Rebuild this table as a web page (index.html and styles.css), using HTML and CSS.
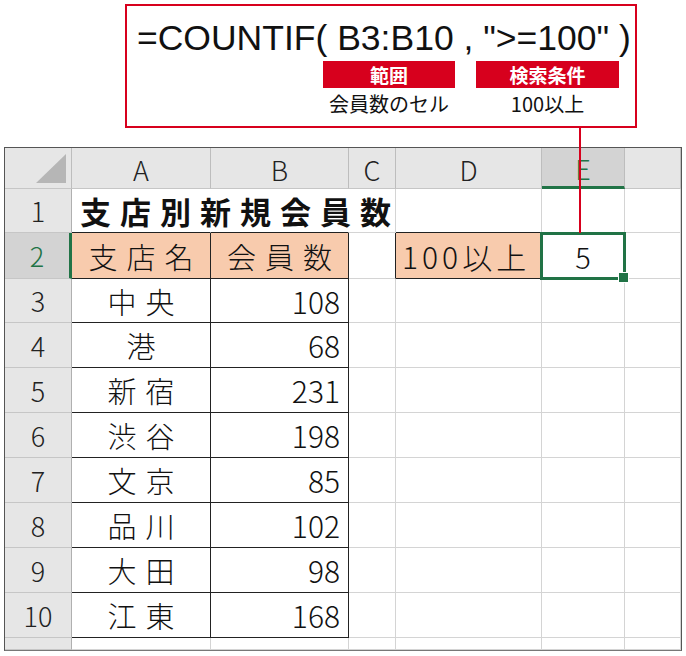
FILE: index.html
```html
<!DOCTYPE html>
<html lang="ja">
<head>
<meta charset="utf-8">
<title>COUNTIF</title>
<link rel="stylesheet" href="styles.css">
</head>
<body>
<div class="callout">
  <div class="formula">=COUNTIF( B3:B10 , "&gt;=100" )</div>
  <div class="args">
    <div class="arg arg-range">
      <div class="tag">範囲</div>
      <div class="desc">会員数のセル</div>
    </div>
    <div class="arg arg-crit">
      <div class="tag">検索条件</div>
      <div class="desc">100以上</div>
    </div>
  </div>
</div>
<div class="pointer"></div>

<div class="sheet">
  <div class="hd corner"><div class="tri"></div></div>
  <div class="hd col">A</div>
  <div class="hd col">B</div>
  <div class="hd col">C</div>
  <div class="hd col">D</div>
  <div class="hd col active-col">E</div>
  <div class="hd col"></div>

  <div class="hd row">1</div>
  <div class="c title nob-r b-bot">支店別新規会員数</div>
  <div class="c nob-r b-bot"></div>
  <div class="c"></div>
  <div class="c b-bot"></div>
  <div class="c"></div>
  <div class="c"></div>

  <div class="hd row active-row">2</div>
  <div class="c peach t jp">支店名</div>
  <div class="c peach t jp">会員数</div>
  <div class="c b-right"></div>
  <div class="c peach b-bot lbl">100以上</div>
  <div class="c sel-cell num-c">5<div class="sel"><div class="handle"></div></div></div>
  <div class="c"></div>

  <div class="hd row">3</div>
  <div class="c t jp">中央</div>
  <div class="c t num">108</div>
  <div class="c"></div><div class="c"></div><div class="c"></div><div class="c"></div>

  <div class="hd row">4</div>
  <div class="c t jp">港</div>
  <div class="c t num">68</div>
  <div class="c"></div><div class="c"></div><div class="c"></div><div class="c"></div>

  <div class="hd row">5</div>
  <div class="c t jp">新宿</div>
  <div class="c t num">231</div>
  <div class="c"></div><div class="c"></div><div class="c"></div><div class="c"></div>

  <div class="hd row">6</div>
  <div class="c t jp">渋谷</div>
  <div class="c t num">198</div>
  <div class="c"></div><div class="c"></div><div class="c"></div><div class="c"></div>

  <div class="hd row">7</div>
  <div class="c t jp">文京</div>
  <div class="c t num">85</div>
  <div class="c"></div><div class="c"></div><div class="c"></div><div class="c"></div>

  <div class="hd row">8</div>
  <div class="c t jp">品川</div>
  <div class="c t num">102</div>
  <div class="c"></div><div class="c"></div><div class="c"></div><div class="c"></div>

  <div class="hd row">9</div>
  <div class="c t jp">大田</div>
  <div class="c t num">98</div>
  <div class="c"></div><div class="c"></div><div class="c"></div><div class="c"></div>

  <div class="hd row">10</div>
  <div class="c t jp">江東</div>
  <div class="c t num">168</div>
  <div class="c"></div><div class="c"></div><div class="c"></div><div class="c"></div>

  <div class="hd row"></div>
  <div class="c"></div><div class="c"></div><div class="c"></div><div class="c"></div><div class="c"></div><div class="c"></div>
</div>
</body>
</html>
```
FILE: styles.css
```css
* { box-sizing: border-box; }
html, body { margin: 0; padding: 0; background: #fff; }
body {
  width: 686px;
  height: 656px;
  overflow: hidden;
  font-family: "Noto Sans CJK JP", "Noto Sans", sans-serif;
  color: #111;
}

/* callout */
.callout {
  margin: 4px 0 0 125px;
  width: 512px;
  height: 124px;
  border: 2px solid #d7001d;
  padding: 14px 0 0 10px;
}
.formula {
  font-family: "Liberation Sans", Arial, sans-serif;
  font-size: 35.5px;
  line-height: 36px;
  color: #111;
  white-space: nowrap;
}
.args {
  display: flex;
  gap: 21px;
  margin: 5px 0 0 186px;
}
.arg { display: flex; flex-direction: column; align-items: center; }
.arg-range { width: 132px; }
.arg-crit { width: 143px; }
.tag {
  width: 100%;
  height: 27px;
  background: #d7001d;
  color: #fff;
  font-weight: 700;
  font-size: 19px;
  line-height: 27px;
  text-align: center;
  font-family: "Noto Sans CJK JP", sans-serif;
}
.desc {
  margin-top: 3px;
  font-size: 20px;
  line-height: 26px;
  font-family: "Noto Sans CJK JP", sans-serif;
  color: #111;
  white-space: nowrap;
}
.pointer {
  position: absolute;
  left: 579px;
  top: 128px;
  width: 2px;
  height: 105px;
  background: #d7001d;
  z-index: 5;
}

/* sheet */
.sheet {
  margin: 19px 0 0 4px;
  width: 678px;
  border: 1px solid #555;
  border-bottom-color: #777;
  display: grid;
  grid-template-columns: 67px 139px 138px 47px 146px 83px 56px;
  grid-template-rows: 41px 44px 46px 44px 45px 45px 45px 45px 45px 45px 45px 12px;
  background: #fff;
  font-family: "Noto Sans CJK JP", "Noto Sans", sans-serif;
  font-weight: 300;
}
.c {
  border-right: 1px solid #d4d4d4;
  border-bottom: 1px solid #d4d4d4;
  display: flex;
  align-items: center;
  font-size: 29px;
  color: #111;
  white-space: nowrap;
}
.hd {
  background: #e6e6e6;
  border-right: 1px solid #bdbdbd;
  border-bottom: 1px solid #c6c6c6;
  display: flex;
  align-items: center;
  justify-content: center;
  color: #222;
}
.col { font-size: 27px; padding-top: 2px; }
.row { font-size: 27px; border-right-color: #b0b0b0; }
.corner {
  justify-content: flex-end;
  align-items: flex-end;
  padding: 0 5px 5px 0;
}
.tri {
  width: 30px;
  height: 29px;
  background: #b6b6b6;
  clip-path: polygon(100% 0, 100% 100%, 0 100%);
}
.active-col {
  background: #d3d3d3;
  color: #217346;
  border-bottom: 3px solid #217346;
}
.active-row {
  background: #d3d3d3;
  color: #217346;
  border-right: 3px solid #217346;
}

.title {
  font-weight: 700;
  font-size: 31px;
  letter-spacing: 9px;
  padding-left: 8px;
  overflow: visible;
  color: #111;
}
.nob-r { border-right-color: transparent; }
.b-bot { border-bottom-color: #222; }
.b-right { border-right-color: #222; }

.peach { background: #f8cbad; }
.t { border-right-color: #222; border-bottom-color: #222; }
.jp {
  justify-content: center;
  letter-spacing: 9px;
  padding-left: 9px;
  font-size: 29px;
}
.num {
  justify-content: flex-end;
  padding-right: 8px;
  font-size: 30px;
}
.lbl {
  padding-left: 6px;
  letter-spacing: 4px;
  font-size: 30px;
  border-right-color: transparent;
}
.num-c { justify-content: center; font-size: 29px; }
.sel-cell { position: relative; }
.sel {
  position: absolute;
  left: -2px;
  top: -1px;
  right: -2px;
  bottom: -2px;
  border: 3px solid #217346;
}
.handle {
  position: absolute;
  right: -6px;
  bottom: -6px;
  width: 11px;
  height: 11px;
  background: #217346;
  border: 1px solid #fff;
}
```
